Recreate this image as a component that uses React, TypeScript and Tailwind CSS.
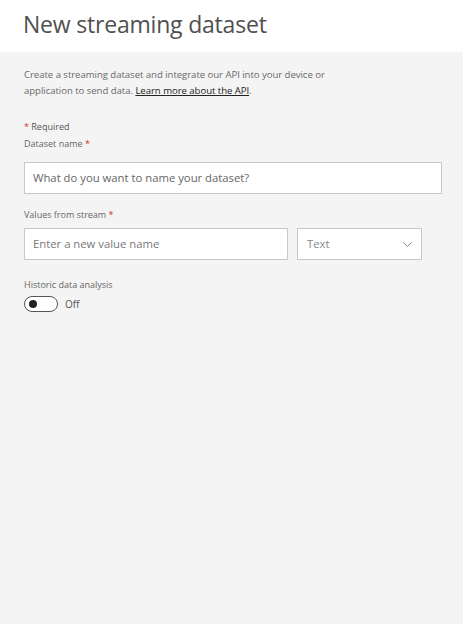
import React from "react";

export default function App() {
  return (
    <div
      className="w-[463px] h-[624px] flex flex-col bg-[#f4f4f4] text-[#444]"
      style={{ fontFamily: '"Open Sans", "Noto Sans", sans-serif' }}
    >
      <div className="h-[52px] bg-white px-[23px] flex items-center">
        <h1 className="text-[23px] leading-none font-normal text-[#505050] tracking-[-0.2px] -mt-[4px]">
          New streaming dataset
        </h1>
      </div>
      <div className="flex flex-col px-[24px] pt-[15px]">
        <p className="text-[9.6px] leading-[16px] text-[#6a6a6a] w-[320px] tracking-[-0.05px]">
          Create a streaming dataset and integrate our API into your device or
          application to send data.{" "}
          <span className="underline text-[#222]">Learn more about the API</span>.
        </p>
        <div className="mt-[22px] text-[9px] leading-[12px] text-[#555]">
          <span className="text-[#d03030]">*</span> Required
        </div>
        <div className="mt-[5px] text-[9px] leading-[12px] text-[#666]">
          Dataset name <span className="text-[#d03030]">*</span>
        </div>
        <div className="mt-[12px] w-[418px] h-[32px] bg-white border border-[#c8c8c8] flex items-center px-[8px] text-[11.3px] text-[#666]">
          What do you want to name your dataset?
        </div>
        <div className="mt-[15px] text-[9px] leading-[12px] text-[#666]">
          Values from stream <span className="text-[#d03030]">*</span>
        </div>
        <div className="mt-[7px] flex gap-[9px]">
          <div className="w-[264px] h-[32px] bg-white border border-[#c8c8c8] flex items-center px-[8px] text-[11.3px] text-[#777]">
            Enter a new value name
          </div>
          <div className="w-[125px] h-[32px] bg-white border border-[#c8c8c8] flex items-center justify-between pl-[9px] pr-[9px] text-[11.3px] text-[#888]">
            <span>Text</span>
            <svg width="9" height="5" viewBox="0 0 9 5" fill="none">
              <path d="M0.5 0.5 L4.5 4.5 L8.5 0.5" stroke="#888" strokeWidth="1" />
            </svg>
          </div>
        </div>
        <div className="mt-[19px] text-[9px] leading-[12px] text-[#666]">
          Historic data analysis
        </div>
        <div className="mt-[5px] flex items-center gap-[7px]">
          <div className="w-[34px] h-[16px] rounded-full border-[1.5px] border-[#555] bg-white flex items-center pl-[4px]">
            <div className="w-[8px] h-[8px] rounded-full bg-[#222]" />
          </div>
          <span className="text-[10px] text-[#555]">Off</span>
        </div>
      </div>
    </div>
  );
}
